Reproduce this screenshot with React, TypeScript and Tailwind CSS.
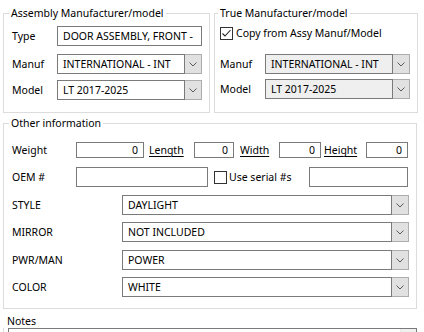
import React from "react";

const Chevron = () => (
  <svg width="8" height="5" viewBox="0 0 8 5" className="block">
    <polyline points="0.5,0.5 4,4 7.5,0.5" fill="none" stroke="#5a5a5a" strokeWidth="1" />
  </svg>
);

type BoxProps = { value?: string; className?: string; right?: boolean };

const TextBox = ({ value = "", className = "", right }: BoxProps) => (
  <div
    className={`flex items-center border border-[#7a7a7a] bg-white px-[5px] whitespace-nowrap overflow-hidden ${
      right ? "justify-end" : ""
    } ${className}`}
  >
    {value}
  </div>
);

type ComboProps = { value: string; className?: string; disabled?: boolean };

const Combo = ({ value, className = "", disabled }: ComboProps) => (
  <div className={`flex h-[20px] ${className}`}>
    <div
      className={`flex-1 flex items-center border border-[#7a7a7a] px-[5px] whitespace-nowrap overflow-hidden ${
        disabled ? "bg-[#efefef]" : "bg-white"
      }`}
    >
      {value}
    </div>
    <div className="w-[17px] flex items-center justify-center border border-l-0 border-[#adadad] bg-[#e1e1e1]">
      <Chevron />
    </div>
  </div>
);

const Check = ({ checked }: { checked?: boolean }) => (
  <div className="w-[13px] h-[13px] border border-[#333] bg-white flex items-center justify-center">
    {checked && (
      <svg width="11" height="11" viewBox="0 0 11 11">
        <polyline points="1.5,5.5 4,8 9.5,2" fill="none" stroke="#222" strokeWidth="1.1" />
      </svg>
    )}
  </div>
);

const Row = ({ label, labelW, children, className = "" }: any) => (
  <div className={`flex items-center ${className}`}>
    <span className="shrink-0" style={{ width: labelW }}>
      {label}
    </span>
    {children}
  </div>
);

export default function App() {
  return (
    <div className="w-[424px] h-[332px] overflow-hidden bg-white text-black font-['Noto_Sans',sans-serif] text-[10.5px] leading-[16px]">
      <div className="flex pl-[3px] pt-[5px] gap-[4px]">
        <fieldset className="w-[207px] h-[108px] border border-[#dcdcdc] pl-[8px] pr-[6px]">
          <legend className="-ml-[3px] px-[2px]">Assembly Manufacturer/model</legend>
          <Row label="Type" labelW={45} className="mt-[5px]">
            <TextBox value="DOOR ASSEMBLY, FRONT -" className="w-[145px] h-[20px]" />
          </Row>
          <Row label="Manuf" labelW={45} className="mt-[8px]">
            <Combo value="INTERNATIONAL - INT" className="w-[145px]" />
          </Row>
          <Row label="Model" labelW={45} className="mt-[6px]">
            <Combo value="LT 2017-2025" className="w-[145px]" />
          </Row>
        </fieldset>
        <fieldset className="w-[204px] h-[108px] border border-[#dcdcdc] pl-[5px]">
          <legend className="-ml-[2px] px-[2px]">True Manufacturer/model</legend>
          <div className="flex items-center h-[20px] mt-[2px] gap-[3px]">
            <Check checked />
            <span>Copy from Assy Manuf/Model</span>
          </div>
          <Row label="Manuf" labelW={45} className="mt-[11px]">
            <Combo value="INTERNATIONAL - INT" className="w-[145px]" disabled />
          </Row>
          <Row label="Model" labelW={45} className="mt-[5px]">
            <Combo value="LT 2017-2025" className="w-[145px]" disabled />
          </Row>
        </fieldset>
      </div>

      <fieldset className="ml-[3px] mt-[2px] w-[414px] h-[194px] border border-[#dcdcdc] pl-[8px]">
        <legend className="-ml-[3px] px-[2px]">Other information</legend>
        <Row label="Weight" labelW={64} className="mt-[11px] h-[16px]">
          <TextBox value="0" right className="w-[68px] h-[16px]" />
          <span className="ml-[5px] w-[45px] underline underline-offset-2">Length</span>
          <TextBox value="0" right className="w-[40px] h-[16px]" />
          <span className="ml-[6px] w-[39px] underline underline-offset-2">Width</span>
          <TextBox value="0" right className="w-[42px] h-[16px]" />
          <span className="ml-[3px] w-[42px] underline underline-offset-2">Height</span>
          <TextBox value="0" right className="w-[42px] h-[16px]" />
        </Row>
        <Row label="OEM #" labelW={64} className="mt-[9px]">
          <TextBox className="w-[132px] h-[20px]" />
          <div className="ml-[6px] flex items-center gap-[2px] w-[95px]">
            <Check />
            <span>Use serial #s</span>
          </div>
          <TextBox className="w-[99px] h-[20px]" />
        </Row>
        <Row label="STYLE" labelW={110} className="mt-[8px]">
          <Combo value="DAYLIGHT" className="w-[287px]" />
        </Row>
        <Row label="MIRROR" labelW={110} className="mt-[7px]">
          <Combo value="NOT INCLUDED" className="w-[287px]" />
        </Row>
        <Row label="PWR/MAN" labelW={110} className="mt-[8px]">
          <Combo value="POWER" className="w-[287px]" />
        </Row>
        <Row label="COLOR" labelW={110} className="mt-[7px]">
          <Combo value="WHITE" className="w-[287px]" />
        </Row>
      </fieldset>

      <div className="mt-[5px] pl-[7px] leading-[14px]">Notes</div>
      <div className="flex">
        <div className="ml-[3px] w-[1px] h-[10px] bg-[#dcdcdc]" />
        <div className="ml-[4px] w-[409px] h-[20px] border border-[#7a7a7a] bg-white flex justify-end">
          <div className="w-[16px] h-full bg-[#f0f0f0] border-l border-[#e8e8e8]" />
        </div>
      </div>
    </div>
  );
}
